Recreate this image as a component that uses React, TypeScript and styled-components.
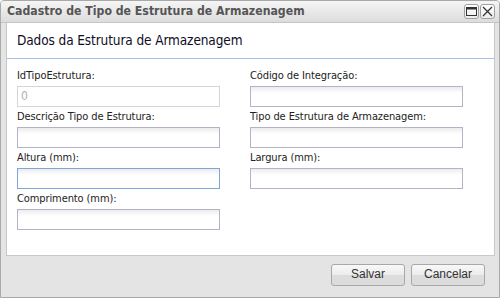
import React from "react";
import styled, { createGlobalStyle } from "styled-components";

const Global = createGlobalStyle`
  html, body { margin: 0; padding: 0; background: #ffffff; }
  * { box-sizing: border-box; }
`;

const Window = styled.div`
  width: 500px;
  height: 298px;
  border: 1px solid #a9a9a9;
  border-radius: 4px 4px 0 0;
  background: #e4e4e4;
  display: flex;
  flex-direction: column;
  overflow: hidden;
  font-family: "DejaVu Sans Condensed", "DejaVu Sans", sans-serif;
  font-stretch: condensed;
`;

const TitleBar = styled.div`
  height: 22px;
  flex: none;
  display: flex;
  align-items: center;
  justify-content: space-between;
  padding: 0 4px 0 6px;
  background: linear-gradient(#f5f5f5, #dcdcdc);
  border-bottom: 1px solid #c4c4c4;
`;

const Title = styled.div`
  font-size: 12.2px;
  font-weight: 700;
  color: #555555;
  padding-bottom: 1px;
`;

const TitleButtons = styled.div`
  display: flex;
  gap: 1px;
`;

const TitleButton = styled.div`
  width: 15px;
  height: 15px;
  border: 1px solid #a0a0a0;
  border-radius: 3px;
  background: linear-gradient(#ffffff, #ececec);
  display: flex;
  align-items: center;
  justify-content: center;
`;

const Body = styled.div`
  flex: 1;
  display: flex;
  flex-direction: column;
  padding: 0 4px 0 5px;
`;

const Panel = styled.div`
  height: 233px;
  background: #ffffff;
  border: 1px solid #c8c8c8;
  border-top: none;
  display: flex;
  flex-direction: column;
`;

const Header = styled.div`
  height: 36px;
  line-height: 35px;
  padding-left: 10px;
  font-size: 13.5px;
  letter-spacing: -0.1px;
  color: #0d0d26;
  border-bottom: 1px solid #a9c1e2;
`;

const Form = styled.div`
  display: grid;
  grid-template-columns: 203px 213px;
  column-gap: 30px;
  padding: 7px 0 0 10px;
`;

const Field = styled.div`
  display: flex;
  flex-direction: column;
`;

const Label = styled.div`
  height: 20px;
  line-height: 20px;
  font-size: 11px;
  letter-spacing: -0.1px;
  color: #222222;
  white-space: nowrap;
`;

const Input = styled.div<{ $state?: "disabled" | "focus" | "normal" }>`
  height: 21px;
  border: 1px solid
    ${(p) =>
      p.$state === "disabled" ? "#d6d6d6" : p.$state === "focus" ? "#7ea6d8" : "#b3b3c6"};
  background: ${(p) =>
    p.$state === "disabled" ? "#ffffff" : "linear-gradient(#ececec 0px, #ffffff 6px, #ffffff)"};
  padding-left: 3px;
  font-size: 12px;
  line-height: 19px;
  color: #b0b0b0;
`;

const Footer = styled.div`
  flex: 1;
  display: flex;
  justify-content: flex-end;
  align-items: flex-start;
  gap: 6px;
  padding: 8px 10px 0 0;
`;

const Button = styled.div`
  width: 74px;
  height: 22px;
  border: 1px solid #a8a8a8;
  border-radius: 3px;
  background: linear-gradient(#f8f8f8 0%, #ececec 50%, #dcdcdc 51%, #dcdcdc 100%);
  font-family: "Liberation Sans", Arial, sans-serif;
  font-stretch: normal;
  font-size: 12px;
  color: #333333;
  display: flex;
  align-items: center;
  justify-content: center;
  padding-bottom: 2px;
`;

export default function App() {
  return (
    <>
      <Global />
      <Window>
        <TitleBar>
          <Title>Cadastro de Tipo de Estrutura de Armazenagem</Title>
          <TitleButtons>
            <TitleButton>
              <svg width="11" height="9" viewBox="0 0 11 9">
                <rect x="0.5" y="0.5" width="10" height="8" fill="none" stroke="#333" />
                <rect x="0.5" y="0.5" width="10" height="2" fill="#333" />
              </svg>
            </TitleButton>
            <TitleButton>
              <svg width="11" height="11" viewBox="0 0 11 11">
                <path d="M1 1 L10 10 M10 1 L1 10" stroke="#333" strokeWidth="1.3" />
              </svg>
            </TitleButton>
          </TitleButtons>
        </TitleBar>
        <Body>
          <Panel>
            <Header>Dados da Estrutura de Armazenagem</Header>
            <Form>
              <Field>
                <Label>IdTipoEstrutura:</Label>
                <Input $state="disabled">0</Input>
              </Field>
              <Field>
                <Label>Código de Integração:</Label>
                <Input />
              </Field>
              <Field>
                <Label>Descrição Tipo de Estrutura:</Label>
                <Input />
              </Field>
              <Field>
                <Label>Tipo de Estrutura de Armazenagem:</Label>
                <Input />
              </Field>
              <Field>
                <Label>Altura (mm):</Label>
                <Input $state="focus" />
              </Field>
              <Field>
                <Label>Largura (mm):</Label>
                <Input />
              </Field>
              <Field>
                <Label>Comprimento (mm):</Label>
                <Input />
              </Field>
            </Form>
          </Panel>
          <Footer>
            <Button>Salvar</Button>
            <Button>Cancelar</Button>
          </Footer>
        </Body>
      </Window>
    </>
  );
}
